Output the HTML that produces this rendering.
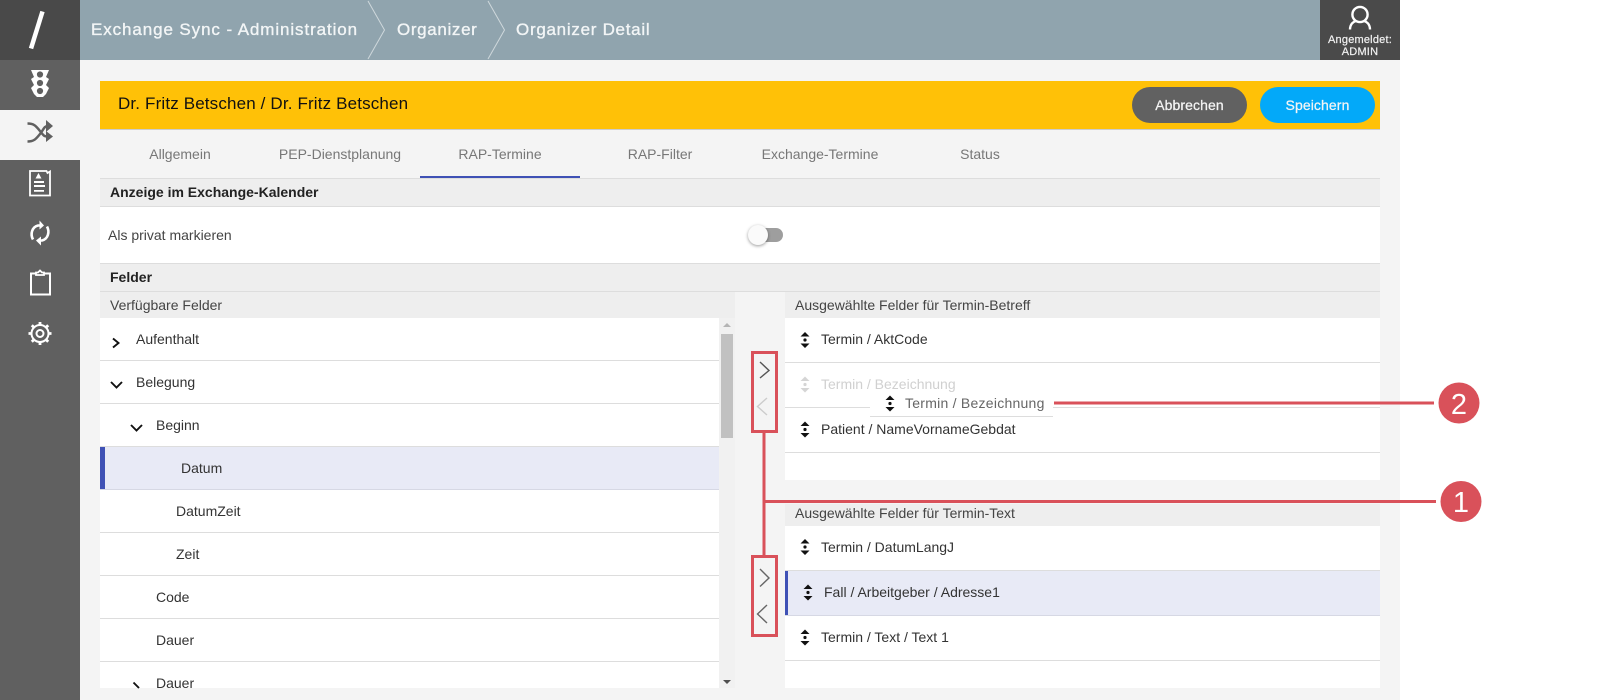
<!DOCTYPE html>
<html lang="de"><head><meta charset="utf-8"><title>Organizer Detail</title>
<style>
html,body{margin:0;padding:0;background:#fff;}
#p{position:relative;width:1600px;height:700px;overflow:hidden;background:#fff;font-family:"Liberation Sans",Arial,sans-serif;font-size:14px;color:#333;}
#p div,#p span.t{position:absolute;}
.t{white-space:nowrap;position:absolute;line-height:16px;}
.h{font-size:17px;color:#f2f5f6;letter-spacing:.65px;line-height:20px;top:20px;-webkit-text-stroke:.35px #f2f5f6;}
.tab{top:146px;width:160px;text-align:center;color:#777;font-size:14px;}
.sec{left:100px;width:1280px;background:#eee;}
.ln{height:1px;background:#ddd;}
.btn{top:87px;width:115px;height:36px;border-radius:18px;color:#f5f5f5;text-align:center;line-height:36px;font-size:14px;letter-spacing:.1px;-webkit-text-stroke:.25px #f5f5f5;}
svg{position:absolute;overflow:visible;}
</style></head><body><div id="p">
<div style="left:0;top:0;width:80px;height:700px;background:#606060"></div>
<div style="left:0;top:0;width:80px;height:60px;background:#494949"></div>
<div style="left:0;top:110px;width:80px;height:50px;background:#f4f4f4"></div>
<div style="left:80px;top:0;width:1240px;height:60px;background:#90a4ae"></div>
<div style="left:1320px;top:0;width:80px;height:60px;background:#4a4a4a"></div>
<div style="left:80px;top:60px;width:1320px;height:640px;background:#f4f4f4"></div>

<svg style="left:0;top:0" width="80" height="60"><path d="M42.5 11.5L31 48.5" stroke="#fff" stroke-width="4.5"/></svg>
<svg style="left:80px;top:0" width="1240" height="60" fill="none" stroke="#cfd8dc" stroke-width="1"><path d="M288 1L304.5 30L288 59M408 1L424.5 30L408 59"/></svg>
<span class="t h" style="left:91px;letter-spacing:.9px">Exchange Sync - Administration</span>
<span class="t h" style="left:397px">Organizer</span>
<span class="t h" style="left:516px;letter-spacing:.72px">Organizer Detail</span>

<svg style="left:1320px;top:0" width="80" height="60" fill="none" stroke="#fff" stroke-width="2.4"><circle cx="40" cy="14.500" r="7.600"/><path d="M30 29.500C30 24 33.500 21.500 36 20.800M50 29.500C50 24 46.500 21.500 44 20.800"/></svg>
<span class="t" style="left:1320px;width:80px;text-align:center;top:34px;font-size:11px;line-height:12px;color:#f2f2f2;letter-spacing:.2px;-webkit-text-stroke:.2px #f2f2f2">Angemeldet:<br>ADMIN</span>

<!-- sidebar icons -->
<svg style="left:0;top:60px" width="80" height="300">
 <path d="M31 10H49L46 17L49 19L46 25L49 28L46 34L43 37H37L34 34L31 28L34 25L31 19L34 17Z" fill="#fff"/>
 <circle cx="40" cy="14.500" r="3.100" fill="#606060"/><circle cx="40" cy="23" r="3.100" fill="#606060"/><circle cx="40" cy="31" r="3.100" fill="#606060"/>
 <g fill="none" stroke="#606060" stroke-width="2.500"><path d="M27.500 63.500C34 63.500 36 66 40 71S44 76.500 48 76.500M27.500 81.500C34 81.500 36 79 40 74S44 66 48 66"/></g>
 <path d="M46 60L53 66L46 72zM46 71L53 76.500L46 82z" fill="#606060"/>
 <path d="M30 111H46.500L47.500 113L50 111.500V135.500H30Z" fill="none" stroke="#fff" stroke-width="1.800"/>
 <path d="M38.500 113L41.500 118.500H35.500zM34 121h10v2H34zM34 125h11v2H34zM34 130h10v1.700H34z" fill="#fff"/>
 <g fill="none" stroke="#fff" stroke-width="2.600"><path d="M33 179.500C30 174 32 167 38 165.500L42 165.500M47 166.500C50 172 48 179 42 180.500L38.500 180.500"/></g>
 <path d="M39.500 160.500L44 165.500L39.500 169.500zM41 176.500L36 180.500L41 185.500z" fill="#fff"/>
 <path d="M36 213.500H31V234.500H50V213.500H44" fill="none" stroke="#fff" stroke-width="2"/>
 <path d="M36 215V212.500H38L40 210.500L42 212.500H44V215z" fill="none" stroke="#fff" stroke-width="1.800"/>
 <circle cx="40" cy="273.500" r="8.500" fill="none" stroke="#fff" stroke-width="2"/><circle cx="40" cy="273.500" r="3.500" fill="none" stroke="#fff" stroke-width="2"/>
 <path d="M40 262v3M40 282v3M28.500 273.500h3M48.500 273.500h3M31.800 265.300l2.200 2.200M46 279.500l2.200 2.200M48.200 265.300l-2.200 2.200M34 279.500l-2.200 2.200" stroke="#fff" stroke-width="2.800"/>
</svg>

<!-- yellow bar -->
<div style="left:100px;top:81px;width:1280px;height:49px;background:#ffc107;border-bottom:1px solid #ccc;box-sizing:border-box"></div>
<span class="t" style="left:118px;top:95px;font-size:17px;line-height:18px;letter-spacing:.15px;color:#111">Dr. Fritz Betschen / Dr. Fritz Betschen</span>
<div class="btn" style="left:1132px;background:#616161">Abbrechen</div>
<div class="btn" style="left:1260px;background:#03a9f9">Speichern</div>

<!-- tabs -->
<span class="t tab" style="left:100px">Allgemein</span>
<span class="t tab" style="left:260px">PEP-Dienstplanung</span>
<span class="t tab" style="left:420px">RAP-Termine</span>
<span class="t tab" style="left:580px">RAP-Filter</span>
<span class="t tab" style="left:740px">Exchange-Termine</span>
<span class="t tab" style="left:900px">Status</span>
<div style="left:420px;top:176px;width:160px;height:2px;background:#3f51b5"></div>

<!-- sections -->
<div class="sec" style="top:178px;height:29px;border-top:1px solid #ddd;border-bottom:1px solid #ddd;box-sizing:border-box"></div>
<span class="t" style="left:110px;top:184px;font-size:14px;font-weight:700;color:#222">Anzeige im Exchange-Kalender</span>
<div style="left:100px;top:207px;width:1280px;height:56px;background:#fff"></div>
<span class="t" style="left:108px;top:227px;color:#444">Als privat markieren</span>
<div style="left:752px;top:228px;width:31px;height:14px;border-radius:7px;background:#9e9e9e"></div>
<div style="left:748px;top:225px;width:20px;height:20px;border-radius:50%;background:#fafafa;box-shadow:0 1px 3px rgba(0,0,0,.4)"></div>
<div class="sec" style="top:263px;height:29px;border-top:1px solid #ddd;border-bottom:1px solid #ddd;box-sizing:border-box"></div>
<span class="t" style="left:110px;top:269px;font-size:14px;font-weight:700;color:#222">Felder</span>
<div style="left:735px;top:292px;width:50px;height:396px;background:#f4f4f4"></div>

<!-- left list -->
<div style="left:100px;top:292px;width:635px;height:26px;background:#eee"></div>
<span class="t" style="left:110px;top:297px;color:#444">Verfügbare Felder</span>
<div style="left:100px;top:318px;width:635px;height:370px;background:#fff;overflow:hidden"></div>
<div style="left:100px;top:447px;width:619px;height:43px;background:#e8eaf6"></div>
<div style="left:100px;top:447px;width:5px;height:43px;background:#3f51b5"></div>
<div class="ln" style="left:100px;top:360px;width:619px"></div>
<div class="ln" style="left:100px;top:403px;width:619px"></div>
<div class="ln" style="left:100px;top:446px;width:619px"></div>
<div class="ln" style="left:100px;top:489px;width:619px;background:#d6d8e4"></div>
<div class="ln" style="left:100px;top:532px;width:619px"></div>
<div class="ln" style="left:100px;top:575px;width:619px"></div>
<div class="ln" style="left:100px;top:618px;width:619px"></div>
<div class="ln" style="left:100px;top:661px;width:619px"></div>
<span class="t" style="left:136px;top:331px">Aufenthalt</span>
<span class="t" style="left:136px;top:374px">Belegung</span>
<span class="t" style="left:156px;top:417px">Beginn</span>
<span class="t" style="left:181px;top:460px">Datum</span>
<span class="t" style="left:176px;top:503px">DatumZeit</span>
<span class="t" style="left:176px;top:546px">Zeit</span>
<span class="t" style="left:156px;top:589px">Code</span>
<span class="t" style="left:156px;top:632px">Dauer</span>
<span class="t" style="left:156px;top:675px;height:13px;overflow:hidden">Dauer</span>
<svg style="left:100px;top:318px" width="60" height="370" fill="none" stroke="#111" stroke-width="1.900"><path d="M13 20.500L18.500 25L13 29.500M11 64L16.500 69.500L22 64M31 107L36.500 112.500L42 107"/><path d="M33.500 364.500L39 370"/></svg>
<div style="left:719px;top:318px;width:16px;height:370px;background:#f1f1f1"></div>
<div style="left:721px;top:334px;width:12px;height:104px;background:#c1c1c1"></div>
<svg style="left:719px;top:318px" width="16" height="370"><path d="M4 9L8 5L12 9z" fill="#b5b5b5"/><path d="M4 362L12 362L8 366z" fill="#505050"/></svg>

<!-- right panels -->
<div style="left:785px;top:292px;width:595px;height:26px;background:#eee"></div>
<span class="t" style="left:795px;top:297px;color:#444">Ausgewählte Felder für Termin-Betreff</span>
<div style="left:785px;top:318px;width:595px;height:162px;background:#fff"></div>
<div class="ln" style="left:785px;top:362px;width:595px"></div>
<div class="ln" style="left:785px;top:407px;width:595px"></div>
<div class="ln" style="left:785px;top:452px;width:595px"></div>
<span class="t" style="left:821px;top:331px">Termin / AktCode</span>
<span class="t" style="left:821px;top:376px;color:#d0d0d0">Termin / Bezeichnung</span>
<span class="t" style="left:821px;top:421px">Patient / NameVornameGebdat</span>

<div style="left:785px;top:504px;width:595px;height:22px;background:#eee"></div>
<span class="t" style="left:795px;top:505px;color:#444">Ausgewählte Felder für Termin-Text</span>
<div style="left:785px;top:526px;width:595px;height:162px;background:#fff"></div>
<div style="left:785px;top:570px;width:595px;height:46px;background:#e8eaf6"></div>
<div style="left:785px;top:570px;width:3px;height:46px;background:#3f51b5"></div>
<div class="ln" style="left:785px;top:570px;width:595px"></div>
<div class="ln" style="left:785px;top:615px;width:595px;background:#d6d8e4"></div>
<div class="ln" style="left:785px;top:660px;width:595px"></div>
<span class="t" style="left:821px;top:539px">Termin / DatumLangJ</span>
<span class="t" style="left:824px;top:584px">Fall / Arbeitgeber / Adresse1</span>
<span class="t" style="left:821px;top:629px">Termin / Text / Text 1</span>

<!-- ghost row -->
<div style="left:870px;top:392px;width:183px;height:24px;background:#fff;border-bottom:1px solid #ddd"></div>
<span class="t" style="left:905px;top:395px;color:#666;letter-spacing:.25px">Termin / Bezeichnung</span>

<!-- grips -->
<svg style="left:0;top:0" width="1600" height="700">
 <g fill="#111">
  <path d="M800.500 336.500h9l-4.500-4.500zM800.500 343.500h9l-4.500 4.500z"/><circle cx="805" cy="340" r="1.600"/>
  <path d="M800.500 426h9l-4.500-4.500zM800.500 433h9l-4.500 4.500z"/><circle cx="805" cy="429.500" r="1.600"/>
  <path d="M800.500 543.500h9l-4.500-4.500zM800.500 550.500h9l-4.500 4.500z"/><circle cx="805" cy="547" r="1.600"/>
  <path d="M803.500 589h9l-4.500-4.500zM803.500 596h9l-4.500 4.500z"/><circle cx="808" cy="592.500" r="1.600"/>
  <path d="M800.500 634h9l-4.500-4.500zM800.500 641h9l-4.500 4.500z"/><circle cx="805" cy="637.500" r="1.600"/>
  <path d="M885.500 400h9l-4.500-4.500zM885.500 407h9l-4.500 4.500z"/><circle cx="890" cy="403.500" r="1.600"/>
 </g>
 <g fill="#d5d5d5"><path d="M800.500 381h9l-4.500-4.500zM800.500 388h9l-4.500 4.500z"/><circle cx="805" cy="384.500" r="1.600"/></g>
 <g fill="none" stroke-width="1.400">
  <path d="M760 362L769 370.500L760 378" stroke="#555"/>
  <path d="M767 398L757.500 406.500L767 415" stroke="#ccc"/>
  <path d="M760 569L769 578L760 586.500" stroke="#666"/>
  <path d="M767 605L757.500 614L767 623" stroke="#666"/>
 </g>
 <!-- callouts -->
 <g fill="none" stroke="#d9515a" stroke-width="3">
  <rect x="752.500" y="352.500" width="24" height="79"/>
  <rect x="752.500" y="556.500" width="24" height="79"/>
  <path d="M764 433V555M765 501.500H1436"/>
  <path d="M1054 403H1434"/>
 </g>
 <circle cx="1461" cy="501.500" r="20.500" fill="#d9515a"/>
 <circle cx="1459" cy="403" r="20.500" fill="#d9515a"/>
 <text x="1461" y="512" text-anchor="middle" font-family="Liberation Sans,Arial,sans-serif" font-size="29" fill="#fff">1</text>
 <text x="1459" y="414" text-anchor="middle" font-family="Liberation Sans,Arial,sans-serif" font-size="29" fill="#fff">2</text>
</svg>
</div></body></html>
